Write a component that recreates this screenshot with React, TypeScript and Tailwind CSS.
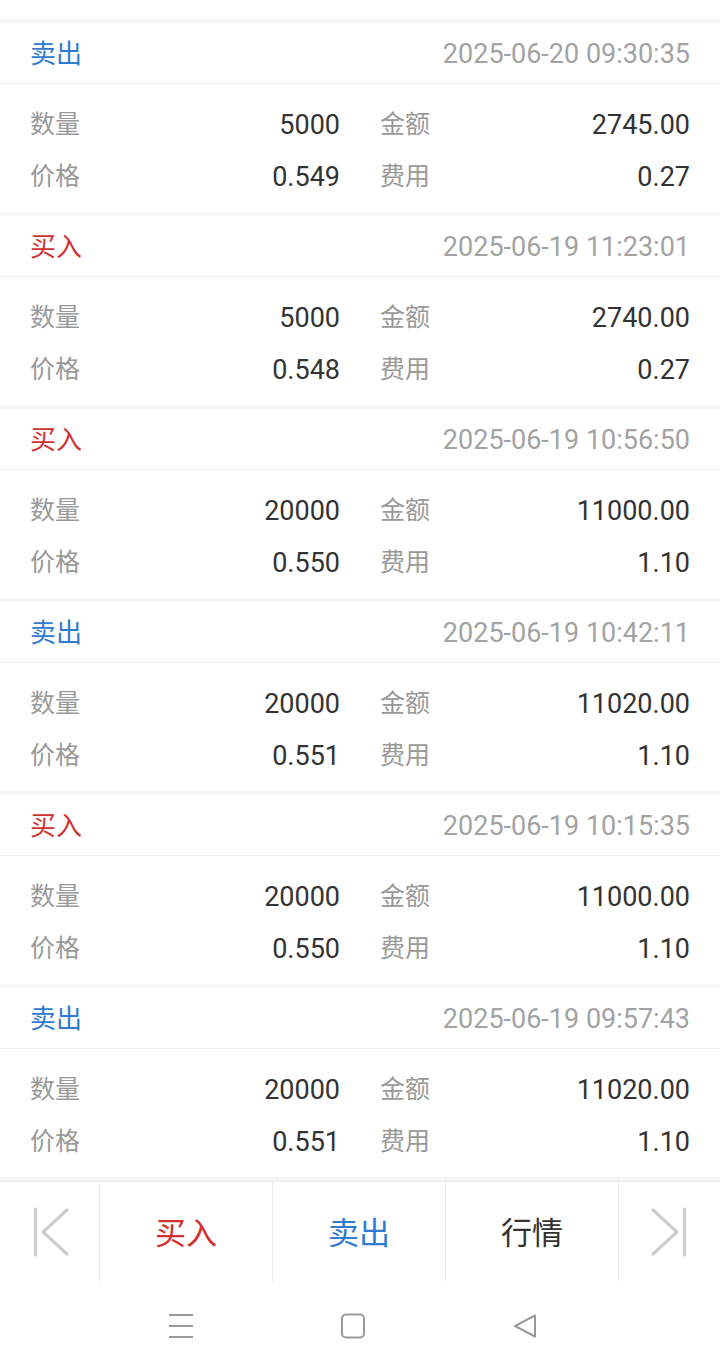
import { ReactNode } from 'react'

type Trade = {
  side: 'buy' | 'sell'
  time: string
  qty: string
  amount: string
  price: string
  fee: string
}

const trades: Trade[] = [
  { side: 'sell', time: '2025-06-20 09:30:35', qty: '5000', amount: '2745.00', price: '0.549', fee: '0.27' },
  { side: 'buy', time: '2025-06-19 11:23:01', qty: '5000', amount: '2740.00', price: '0.548', fee: '0.27' },
  { side: 'buy', time: '2025-06-19 10:56:50', qty: '20000', amount: '11000.00', price: '0.550', fee: '1.10' },
  { side: 'sell', time: '2025-06-19 10:42:11', qty: '20000', amount: '11020.00', price: '0.551', fee: '1.10' },
  { side: 'buy', time: '2025-06-19 10:15:35', qty: '20000', amount: '11000.00', price: '0.550', fee: '1.10' },
  { side: 'sell', time: '2025-06-19 09:57:43', qty: '20000', amount: '11020.00', price: '0.551', fee: '1.10' },
]

const cjk = "font-['Roboto','Noto_Sans_CJK_SC',sans-serif]"

function Cell({ label, value }: { label: string; value: string }) {
  return (
    <div className="flex items-center justify-between h-[52px]">
      <span className="text-[25px] text-[#999999]">{label}</span>
      <span className="text-[27px] text-[#333333]">{value}</span>
    </div>
  )
}

function TradeCard({ t }: { t: Trade }) {
  const isBuy = t.side === 'buy'
  return (
    <div className="bg-white">
      <div className="h-[61px] px-[30px] pt-[3px] flex items-center justify-between border-b border-[#f0f0f0]">
        <span className={isBuy ? 'text-[26px] text-[#d0302f]' : 'text-[26px] text-[#2e7bcf]'}>
          {isBuy ? '买入' : '卖出'}
        </span>
        <span className="text-[27px] text-[#a3a3a3]">{t.time}</span>
      </div>
      <div className="px-[30px] pt-[15px] pb-[9px] grid grid-cols-2 gap-x-[40px]">
        <Cell label="数量" value={t.qty} />
        <Cell label="金额" value={t.amount} />
        <Cell label="价格" value={t.price} />
        <Cell label="费用" value={t.fee} />
      </div>
    </div>
  )
}

function BarCell({ children }: { children: ReactNode }) {
  return (
    <div className="w-[173px] h-full flex items-center justify-center border-r border-[#e8e8e8]">
      {children}
    </div>
  )
}

export default function App() {
  return (
    <div className={`w-[720px] h-[1369px] bg-white flex flex-col ${cjk}`}>
      <div className="h-[19px] bg-white" />
      <div className="flex flex-col gap-[4px] bg-[#f5f6f8] pt-[4px] pb-[4px]">
        {trades.map((t, i) => (
          <TradeCard key={i} t={t} />
        ))}
      </div>

      {/* bottom action bar */}
      <div className="h-[100px] bg-white border-t border-[#eeeeee] flex">
        <div className="w-[100px] h-full flex items-center justify-center border-r border-[#e8e8e8]">
          <svg width="40" height="52" viewBox="0 0 40 52" fill="none" stroke="#cccccc" strokeWidth="3.2" strokeLinecap="round" strokeLinejoin="round">
            <line x1="5.5" y1="3" x2="5.5" y2="49" />
            <polyline points="37,4 13,26 37,48" />
          </svg>
        </div>
        <BarCell>
          <span className="text-[31px] text-[#d0302f] pt-[6px]">买入</span>
        </BarCell>
        <BarCell>
          <span className="text-[31px] text-[#2e7bcf] pt-[6px]">卖出</span>
        </BarCell>
        <BarCell>
          <span className="text-[31px] text-[#333333] pt-[6px]">行情</span>
        </BarCell>
        <div className="flex-1 h-full flex items-center justify-center">
          <svg width="40" height="52" viewBox="0 0 40 52" fill="none" stroke="#cccccc" strokeWidth="3.2" strokeLinecap="round" strokeLinejoin="round">
            <polyline points="3,4 27,26 3,48" />
            <line x1="34.5" y1="3" x2="34.5" y2="49" />
          </svg>
        </div>
      </div>

      {/* system nav bar */}
      <div className="flex-1 bg-white">
        <div className="flex items-center justify-center gap-[146px] pt-[32px] pr-[14px]">
          <svg width="26" height="26" viewBox="0 0 26 26" stroke="#9a9a9a" strokeWidth="2">
            <line x1="1" y1="2" x2="25" y2="2" />
            <line x1="1" y1="13" x2="25" y2="13" />
            <line x1="1" y1="24" x2="25" y2="24" />
          </svg>
          <svg width="26" height="26" viewBox="0 0 26 26" fill="none" stroke="#9a9a9a" strokeWidth="2">
            <rect x="2" y="1.5" width="22" height="23" rx="4" />
          </svg>
          <svg width="26" height="26" viewBox="0 0 26 26" fill="none" stroke="#9a9a9a" strokeWidth="2" strokeLinejoin="round">
            <path d="M23 2.5 L3 13 L23 23.5 Z" />
          </svg>
        </div>
      </div>
    </div>
  )
}
